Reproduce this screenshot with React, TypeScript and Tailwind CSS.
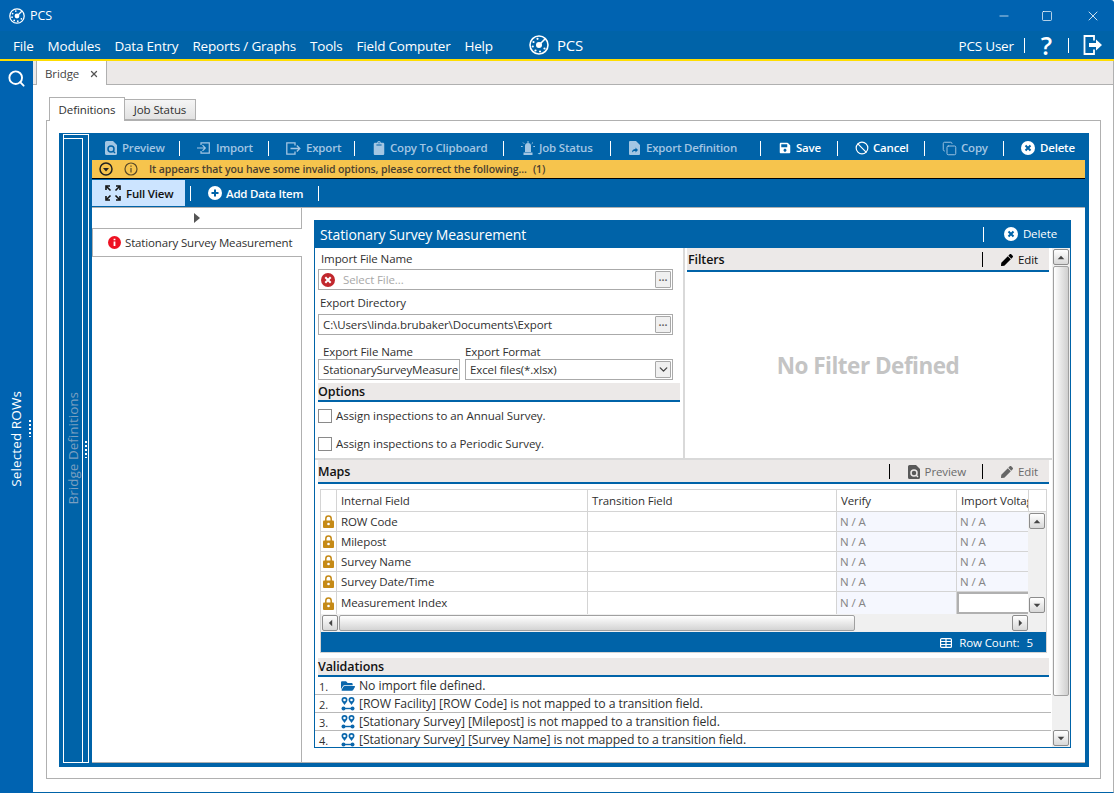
import { ChevronDown, Search, Ban, Copy, X, Minus, Square } from 'lucide-react';
import { FaClipboard, FaFolderOpen, FaPen, FaSave } from 'react-icons/fa';
import type { ReactNode } from 'react';

function PreviewIcon({ cut, className }: { cut: string; className: string }) {
  return (
    <svg viewBox="0 0 12 14" className={className} fill="currentColor">
      <path d="M1.5 0H8l4 4v8.5A1.5 1.5 0 0 1 10.5 14h-9A1.5 1.5 0 0 1 0 12.5v-11A1.5 1.5 0 0 1 1.5 0Z" />
      <circle cx="6" cy="8" r="3" fill="none" stroke={cut} strokeWidth="1.5" />
      <path d="m8 10 2 2" stroke={cut} strokeWidth="1.5" />
    </svg>
  );
}

function ImportIcon() {
  return (
    <svg viewBox="0 0 13 12" className="h-[12px] w-[13px]" fill="none" stroke="currentColor" strokeWidth="1.2">
      <path d="M4 3V.8h8.3v10.400H4V9" />
      <path d="M0 6h8M5.5 3.200 8.300 6 5.500 8.800" />
    </svg>
  );
}

function ExportIcon() {
  return (
    <svg viewBox="0 0 15 13" className="h-[13px] w-[15px]" fill="none" stroke="currentColor" strokeWidth="1.3">
      <path d="M9 3.500V.8H.8v11.400H9V9.500" />
      <path d="M4.500 6.500h9M10.800 3.500l3 3-3 3" />
    </svg>
  );
}

function SirenIcon() {
  return (
    <svg viewBox="0 0 14 14" className="h-[14px] w-[14px]" fill="currentColor">
      <path d="M4 5a3 3 0 0 1 6 0v6H4Z" />
      <path d="M2.500 11.500h9V14h-9Z" />
      <path d="M7 0v2M2 1.500l1.300 1.300M12 1.500l-1.300 1.300M0 5.500h1.700M14 5.500h-1.700" stroke="currentColor" strokeWidth="1" />
    </svg>
  );
}

function ExportDocIcon() {
  return (
    <svg viewBox="0 0 11 14" className="h-[14px] w-[11px]" fill="currentColor">
      <path d="M1 0h6l4 4v9a1 1 0 0 1-1 1H1a1 1 0 0 1-1-1V1a1 1 0 0 1 1-1Z" />
      <path d="M3 11.500c0-2 1.200-3.500 3.500-3.500V6.500L9 9l-2.500 2.500V10c-1.500 0-2.500.4-3.500 1.500Z" fill="#0063a8" />
    </svg>
  );
}

function CircleX({ className }: { className: string }) {
  return (
    <svg viewBox="0 0 14 14" className={className}>
      <circle cx="7" cy="7" r="7" fill="#fff" />
      <path d="m4.500 4.500 5 5m0-5-5 5" stroke="#0063a8" strokeWidth="2" />
    </svg>
  );
}

function FullViewIcon() {
  return (
    <svg viewBox="0 0 16 16" className="h-[16px] w-[16px]" fill="none" stroke="#111" strokeWidth="1.6">
      <path d="M1 5V1h4M11 1h4v4M15 11v4h-4M5 15H1v-4" />
      <path d="m1.500 1.500 4 4M14.500 1.500l-4 4M14.500 14.500l-4-4M1.500 14.500l4-4" />
    </svg>
  );
}

function Lock() {
  return (
    <svg viewBox="0 0 11 13" className="h-[13px] w-[11px]">
      <path d="M2.800 6V3.700a2.700 2.700 0 0 1 5.400 0V6" fill="none" stroke="#c58a17" strokeWidth="1.5" />
      <rect x="0" y="5.500" width="11" height="7.500" rx="1" fill="#c58a17" />
      <circle cx="5.500" cy="9" r="1.300" fill="#fff" />
    </svg>
  );
}

function MapLink() {
  return (
    <svg viewBox="0 0 14 14" className="h-[14px] w-[14px] shrink-0" fill="#0b67ac">
      <path d="M3.500 0a3 3 0 0 1 3 3c0 1.500-2 3.500-3 5-1-1.500-3-3.500-3-5a3 3 0 0 1 3-3Zm0 1.700a1.300 1.300 0 1 0 0 2.600 1.300 1.300 0 0 0 0-2.600Z" />
      <path d="M10.500 0a3 3 0 0 1 3 3c0 1.500-2 3.500-3 5-1-1.500-3-3.500-3-5a3 3 0 0 1 3-3Zm0 1.700a1.300 1.300 0 1 0 0 2.600 1.300 1.300 0 0 0 0-2.600Z" />
      <circle cx="2.500" cy="11.500" r="2" />
      <circle cx="11.500" cy="11.500" r="2" />
      <path d="M3 10.800h8v1.400H3Z" />
    </svg>
  );
}

function Logo({ className }: { className: string }) {
  return (
    <svg viewBox="0 0 20 20" className={className} fill="none" stroke="#fff">
      <circle cx="10" cy="10" r="9" strokeWidth="1.6" />
      <circle cx="10" cy="10" r="3" fill="#fff" stroke="none" />
      <path d="m11 9 5-5" strokeWidth="1.6" />
      <g fill="#fff" stroke="none">
        <circle cx="4.500" cy="7" r="1.100" />
        <circle cx="8.500" cy="3.800" r="1.100" />
        <circle cx="3.800" cy="11.500" r="1.100" />
        <circle cx="6.500" cy="15.500" r="1.100" />
        <circle cx="11" cy="16.500" r="1.100" />
        <circle cx="15.500" cy="13.500" r="1.100" />
      </g>
    </svg>
  );
}

function LogoutIcon() {
  return (
    <svg viewBox="0 0 20 20" className="h-[20px] w-[20px]" fill="none" stroke="#fff" strokeWidth="1.8">
      <path d="M11 5.500V1H1.500v18H11v-4.500" />
      <path d="M6 8h7V4.500l6 5.500-6 5.500V12H6Z" fill="#fff" stroke="none" />
    </svg>
  );
}

function Tri({ dir }: { dir: 'up' | 'down' | 'left' | 'right' }) {
  const pts = { up: '0,5 4,1 8,5', down: '0,1 8,1 4,5', left: '5,0 5,8 1,4', right: '1,0 1,8 5,4' }[dir];
  const box = dir === 'up' || dir === 'down' ? '0 0 8 6' : '0 0 6 8';
  const size = dir === 'up' || dir === 'down' ? 'h-[5px] w-[8px]' : 'h-[8px] w-[5px]';
  return (
    <svg viewBox={box} className={size} fill="#444">
      <polygon points={pts} />
    </svg>
  );
}

function ScrollBtn({ dir }: { dir: 'up' | 'down' | 'left' | 'right' }) {
  return (
    <div className="flex h-[16px] w-[16px] shrink-0 items-center justify-center rounded-[2px] border border-[#8c8c8c] bg-gradient-to-b from-white to-[#d8d8d8]">
      <Tri dir={dir} />
    </div>
  );
}

function Sep({ className = 'bg-white' }: { className?: string }) {
  return <div className={`h-[15px] w-px shrink-0 ${className}`} />;
}

const toolItems: { label: string; icon: ReactNode; width: string; on?: boolean; gap: string }[] = [
  { label: 'Preview', icon: <PreviewIcon cut="#0063a8" className="h-[14px] w-[12px]" />, width: 'w-[87px] pl-[13px]', gap: 'gap-[5px]' },
  { label: 'Import', icon: <ImportIcon />, width: 'w-[88px] pl-[17px]', gap: 'gap-[6px]' },
  { label: 'Export', icon: <ExportIcon />, width: 'w-[85px] pl-[17px]', gap: 'gap-[5px]' },
  { label: 'Copy To Clipboard', icon: <FaClipboard className="h-[14px] w-[12px]" />, width: 'w-[148px] pl-[18px]', gap: 'gap-[5px]' },
  { label: 'Job Status', icon: <SirenIcon />, width: 'w-[106px] pl-[17px]', gap: 'gap-[4px]' },
  { label: 'Export Definition', icon: <ExportDocIcon />, width: 'w-[149px] pl-[18px]', gap: 'gap-[6px]' },
  { label: 'Save', icon: <FaSave className="h-[12px] w-[12px]" />, width: 'w-[76px] pl-[18px]', gap: 'gap-[5px]', on: true },
  { label: 'Cancel', icon: <Ban className="h-[14px] w-[14px]" strokeWidth={2} />, width: 'w-[86px] pl-[17px]', gap: 'gap-[4px]', on: true },
  { label: 'Copy', icon: <Copy className="h-[15px] w-[15px]" strokeWidth={1.5} />, width: 'w-[78px] pl-[17px]', gap: 'gap-[4px]' },
  { label: 'Delete', icon: <CircleX className="h-[14px] w-[14px]" />, width: 'w-[84px] pl-[17px]', gap: 'gap-[5px]', on: true },
];

const menuItems = ['File', 'Modules', 'Data Entry', 'Reports / Graphs', 'Tools', 'Field Computer', 'Help'];

const mapRows = [
  { name: 'ROW Code', h: 'h-[20px]' },
  { name: 'Milepost', h: 'h-[20px]' },
  { name: 'Survey Name', h: 'h-[20px]' },
  { name: 'Survey Date/Time', h: 'h-[20px]' },
  { name: 'Measurement Index', h: 'h-[22px]', last: true },
];

const validations = [
  { text: 'No import file defined.', folder: true },
  { text: '[ROW Facility] [ROW Code] is not mapped to a transition field.' },
  { text: '[Stationary Survey] [Milepost] is not mapped to a transition field.' },
  { text: '[Stationary Survey] [Survey Name] is not mapped to a transition field.' },
];

function SectionHead({ title, className, titleClass = '', children }: { title: string; className: string; titleClass?: string; children?: ReactNode }) {
  return (
    <div className={`flex shrink-0 items-center justify-between border-b-2 border-[#0063a8] bg-[#ece9e8] pt-px font-semibold text-[#111] ${className}`}>
      <span className={titleClass}>{title}</span>
      {children}
    </div>
  );
}

function BrowseBtn() {
  return (
    <div className="flex h-[17px] w-[16px] shrink-0 items-center justify-center rounded-[1px] border border-[#a8a8a8] bg-[#f0f0f0] text-[8px] leading-none tracking-normal text-[#666]">
      •••
    </div>
  );
}

export default function App() {
  return (
    <div className="h-[793px] w-[1116px] overflow-hidden bg-white font-['Open_Sans','Noto_Sans',sans-serif] text-[11.5px] tracking-[-0.1px] text-[#303030]">
      <div className="flex h-[793px] w-[1114px] flex-col rounded-tr-[3px] bg-[#0063b1]">
        {/* title bar */}
        <div className="flex h-[31px] shrink-0 items-center text-white">
          <Logo className="ml-[9px] h-[16px] w-[16px]" />
          <span className="ml-[5px] pt-[2px] text-[12.5px]">PCS</span>
          <Minus className="ml-auto h-[14px] w-[14px]" strokeWidth={1.2} />
          <Square className="ml-[30px] h-[12px] w-[12px]" strokeWidth={1.4} />
          <X className="ml-[32px] mr-[13px] h-[16px] w-[16px]" strokeWidth={1.2} />
        </div>

        {/* menu bar */}
        <div className="flex h-[30px] shrink-0 items-center border-b-2 border-[#ffdd00] bg-[#0063a8] pl-[13px] text-[13.5px] tracking-[-0.2px] text-white">
          <div className="flex gap-[14px] pt-[2px]">
            {menuItems.map(item => (
              <span key={item}>{item}</span>
            ))}
          </div>
          <Logo className="ml-[36px] h-[20px] w-[20px]" />
          <span className="ml-[8px] pt-[1px] text-[15px]">PCS</span>
          <span className="ml-auto pt-[2px]">PCS User</span>
          <div className="ml-[10px] h-[15px] w-px bg-white" />
          <span className="ml-[16px] text-[25px] font-semibold leading-none">?</span>
          <div className="ml-[16px] h-[15px] w-px bg-white" />
          <div className="ml-[14px] mr-[11px]">
            <LogoutIcon />
          </div>
        </div>

        <div className="flex min-h-0 flex-1">
          {/* left rail */}
          <div className="relative flex w-[33px] shrink-0 flex-col items-center text-white">
            <Search className="mt-[8px] h-[19px] w-[19px]" strokeWidth={2.4} />
            <div className="mt-[303px] rotate-180 text-[13.5px] font-medium tracking-[0.1px] [writing-mode:vertical-rl]">Selected ROWs</div>
            <div className="absolute left-[29px] top-[359px] h-[17px] w-[2px] bg-[repeating-linear-gradient(to_bottom,#fff_0,#fff_2px,transparent_2px,transparent_4px)]" />
          </div>

          <div className="flex min-w-0 flex-1 flex-col border-b border-r border-[#0063a8] border-r-[#b0b0b0] bg-white">
            {/* document tab strip */}
            <div className="flex h-[24px] shrink-0 border-b border-[#b0b0b0] bg-[#ece9e8] pl-[3px]">
              <div className="flex h-[24px] w-[71px] items-center border-x border-[#b0b0b0] bg-white pl-[8px] pt-[2px] text-[#444]">
                Bridge
                <X className="ml-[10px] h-[10px] w-[10px] text-[#555]" strokeWidth={3} />
              </div>
            </div>

            <div className="flex min-h-0 flex-1 flex-col pb-[13px] pl-[13px] pr-[12px] pt-[12px]">
              {/* inner tabs */}
              <div className="relative z-10 -mb-px flex h-[24px] shrink-0 items-end pl-[3px]">
                <div className="flex h-[24px] w-[76px] items-center justify-center border-x border-t border-[#b0b0b0] bg-white pt-px">Definitions</div>
                <div className="mb-px flex h-[21px] w-[71px] items-center justify-center border-y border-r border-[#b0b0b0] bg-gradient-to-b from-[#f5f5f5] to-[#e2e2e2]">Job Status</div>
              </div>

              <div className="flex min-h-0 flex-1 flex-col border border-[#b0b0b0] pb-[11px] pl-[12px] pr-[11px] pt-[12px]">
                <div className="flex min-h-0 flex-1 bg-[#0063a8] pb-[4px] pl-[4px]">
                  {/* collapsed Bridge Definitions strip */}
                  <div className="relative mt-px w-[26px] shrink-0 border border-white">
                    <div className="mt-[3px] flex h-[calc(100%-3px)] w-[19px] items-center justify-center border-r border-t border-white">
                      <div className="mb-[4px] rotate-180 text-[13.5px] font-medium tracking-normal text-[#7a9fc0] [writing-mode:vertical-rl]">Bridge Definitions</div>
                    </div>
                    <div className="absolute left-[21px] top-[306px] h-[17px] w-[2px] bg-[repeating-linear-gradient(to_bottom,#fff_0,#fff_2px,transparent_2px,transparent_4px)]" />
                  </div>

                  <div className="ml-[3px] flex min-w-0 flex-1 flex-col">
                    {/* toolbar */}
                    <div className="flex h-[27px] shrink-0 items-center pt-[3px]">
                      {toolItems.map((t, i) => (
                        <div key={t.label} className="flex items-center">
                          <div className={`flex items-center font-semibold tracking-[-0.2px] ${t.width} ${t.gap} ${t.on ? 'text-white' : 'text-[#a3c6e3]'}`}>
                            {t.icon}
                            <span>{t.label}</span>
                          </div>
                          {i < toolItems.length - 1 && <Sep />}
                        </div>
                      ))}
                    </div>

                    {/* warning bar */}
                    <div className="mr-[4px] flex h-[19px] shrink-0 items-center border-b border-black bg-[#f6c44d] pl-[7px] text-[10.5px] font-semibold text-[#4a4030]">
                      <svg viewBox="0 0 14 14" className="h-[14px] w-[14px]" fill="none" stroke="#222" strokeWidth="1.5">
                        <circle cx="7" cy="7" r="6" />
                        <path d="M4 6h6L7 9.500Z" fill="#222" stroke="none" />
                      </svg>
                      <svg viewBox="0 0 14 14" className="ml-[11px] h-[14px] w-[14px]" fill="none" stroke="#5a4a28" strokeWidth="1.2">
                        <circle cx="7" cy="7" r="6" />
                        <path d="M7 6v4.500M7 3.500v1.200" />
                      </svg>
                      <span className="ml-[11px] pt-px">It appears that you have some invalid options, please correct the following...</span>
                      <span className="ml-[6px] pt-px">(1)</span>
                    </div>

                    {/* view bar */}
                    <div className="flex h-[28px] shrink-0 items-center text-white">
                      <div className="flex h-[26px] w-[93px] items-center gap-[5px] bg-[#cce4ff] pl-[13px] font-semibold tracking-[-0.2px] text-[#111]">
                        <FullViewIcon />
                        <span className="pt-[2px]">Full View</span>
                      </div>
                      <div className="ml-[5px] h-[15px] w-px bg-white" />
                      <div className="ml-[17px] flex items-center gap-[4px] font-semibold tracking-[-0.2px]">
                        <svg viewBox="0 0 14 14" className="h-[14px] w-[14px]">
                          <circle cx="7" cy="7" r="7" fill="#fff" />
                          <path d="M7 3.500v7M3.500 7h7" stroke="#0063a8" strokeWidth="2" />
                        </svg>
                        <span className="pt-[2px]">Add Data Item</span>
                      </div>
                      <div className="ml-[15px] h-[15px] w-px bg-white" />
                    </div>

                    {/* work area */}
                    <div className="mr-[4px] flex min-h-0 flex-1 border-b border-t border-[#b0b0b0] bg-white">
                      <div className="flex w-[210px] shrink-0 flex-col">
                        <div className="flex h-[21px] shrink-0 items-center justify-center border-b border-r border-[#b0b0b0]">
                          <svg viewBox="0 0 6 10" className="h-[10px] w-[6px]" fill="#555">
                            <polygon points="0,0 6,5 0,10" />
                          </svg>
                        </div>
                        <div className="flex h-[28px] shrink-0 items-center gap-[4px] border-b border-l border-[#b0b0b0] pl-[15px]">
                          <svg viewBox="0 0 13 13" className="h-[13px] w-[13px] shrink-0">
                            <circle cx="6.500" cy="6.500" r="6.500" fill="#ee1122" />
                            <path d="M6.500 5.500V10M6.500 2.800v1.400" stroke="#fff" strokeWidth="1.8" />
                          </svg>
                          <span className="whitespace-nowrap tracking-[-0.15px]">Stationary Survey Measurement</span>
                        </div>
                        <div className="flex-1 border-r border-[#b0b0b0]" />
                      </div>

                      {/* detail panel */}
                      <div className="ml-[12px] mt-[12px] flex h-[528px] w-[757px] shrink-0 flex-col">
                        <div className="flex h-[28px] shrink-0 items-center bg-[#0063a8] pl-[6px] text-white">
                          <span className="pt-px text-[14px] font-medium">Stationary Survey Measurement</span>
                          <div className="ml-auto h-[15px] w-px bg-white" />
                          <CircleX className="ml-[20px] h-[14px] w-[14px]" />
                          <span className="ml-[5px] mr-[14px]">Delete</span>
                        </div>

                        <div className="flex min-h-0 flex-1 border-x border-b border-[#0063a8]">
                          <div className="flex min-w-0 flex-1 flex-col">
                            {/* upper half */}
                            <div className="flex h-[210px] shrink-0">
                              <div className="flex w-[370px] shrink-0 flex-col border-r-2 border-[#d9d9d9]">
                                <div className="flex h-[21px] items-end pb-[2px] pl-[6px]">Import File Name</div>
                                <div className="ml-[3px] flex h-[21px] w-[355px] items-center border border-[#aaa] pl-[2px] pr-px">
                                  <svg viewBox="0 0 14 14" className="h-[14px] w-[14px]">
                                    <circle cx="7" cy="7" r="7" fill="#c1272d" />
                                    <path d="m4.300 4.300 5.400 5.400m0-5.400-5.400 5.400" stroke="#fff" strokeWidth="2" />
                                  </svg>
                                  <span className="ml-[8px] text-[#a8a8a8]">Select File...</span>
                                  <div className="ml-auto">
                                    <BrowseBtn />
                                  </div>
                                </div>
                                <div className="flex h-[24px] items-end pb-[3px] pl-[5px]">Export Directory</div>
                                <div className="ml-[3px] flex h-[21px] w-[355px] items-center border border-[#aaa] pl-[4px] pr-px">
                                  <span>C:\Users\linda.brubaker\Documents\Export</span>
                                  <div className="ml-auto">
                                    <BrowseBtn />
                                  </div>
                                </div>
                                <div className="ml-[3px] mt-[9px] flex w-[355px] gap-[5px]">
                                  <div className="w-[142px] shrink-0">
                                    <div className="h-[15px] pl-[5px] leading-[15px]">Export File Name</div>
                                    <div className="flex h-[21px] items-center overflow-hidden whitespace-nowrap border border-[#aaa] pl-[4px]">StationarySurveyMeasure</div>
                                  </div>
                                  <div className="min-w-0 flex-1">
                                    <div className="h-[15px] leading-[15px]">Export Format</div>
                                    <div className="flex h-[21px] items-center border border-[#aaa] pl-[4px] pr-px">
                                      Excel files(*.xlsx)
                                      <div className="ml-auto flex h-[17px] w-[16px] items-center justify-center rounded-[1px] border border-[#a8a8a8] bg-[#f0f0f0]">
                                        <ChevronDown className="h-[13px] w-[13px] text-[#444]" strokeWidth={2.5} />
                                      </div>
                                    </div>
                                  </div>
                                </div>
                                <SectionHead title="Options" className="ml-[3px] mt-[3px] h-[19px] w-[362px] text-[12.5px]" />
                                <div className="ml-[3px] mt-[7px] flex h-[14px] items-center gap-[4px] tracking-[-0.05px]">
                                  <div className="h-[14px] w-[14px] border border-[#8a8a8a] bg-white" />
                                  Assign inspections to an Annual Survey.
                                </div>
                                <div className="ml-[3px] mt-[14px] flex h-[14px] items-center gap-[4px] tracking-[-0.05px]">
                                  <div className="h-[14px] w-[14px] border border-[#8a8a8a] bg-white" />
                                  Assign inspections to a Periodic Survey.
                                </div>
                              </div>

                              <div className="flex min-w-0 flex-1 flex-col pl-[2px] pr-[3px]">
                                <SectionHead title="Filters" titleClass="pt-[2px]" className="h-[24px] pl-px text-[12.5px]">
                                  <div className="flex items-center text-[11.5px] font-normal">
                                    <Sep className="bg-black" />
                                    <FaPen className="ml-[18px] h-[12px] w-[12px] text-black" />
                                    <span className="ml-[5px] mr-[11px]">Edit</span>
                                  </div>
                                </SectionHead>
                                <div className="flex flex-1 items-center justify-center pt-[2px] text-[22.5px] font-bold tracking-[-0.5px] text-[#c4c4c4]">No Filter Defined</div>
                              </div>
                            </div>

                            {/* maps */}
                            <div className="flex h-[200px] shrink-0 flex-col border-t-2 border-[#d9d9d9]">
                              <SectionHead title="Maps" titleClass="pt-[2px]" className="ml-[3px] mr-[3px] h-[24px] text-[12.5px]">
                                <div className="flex items-center text-[11.5px] font-normal text-[#6b6b6b]">
                                  <Sep className="bg-black" />
                                  <div className="ml-[18px] text-[#595959]">
                                    <PreviewIcon cut="#ece9e8" className="h-[14px] w-[12px]" />
                                  </div>
                                  <span className="ml-[5px]">Preview</span>
                                  <div className="ml-[16px]">
                                    <Sep className="bg-black" />
                                  </div>
                                  <FaPen className="ml-[18px] h-[12px] w-[12px] text-[#666]" />
                                  <span className="ml-[5px] mr-[11px]">Edit</span>
                                </div>
                              </SectionHead>

                              <div className="ml-[5px] mt-[5px] flex h-[164px] w-[727px] shrink-0 flex-col border border-[#d4d4d4]">
                                <div className="flex h-[22px] shrink-0 border-b border-[#d4d4d4]">
                                  <div className="w-[16px] border-r border-[#d4d4d4]" />
                                  <div className="flex w-[251px] items-center border-r border-[#d4d4d4] pl-[4px]">Internal Field</div>
                                  <div className="flex w-[249px] items-center border-r border-[#d4d4d4] pl-[4px]">Transition Field</div>
                                  <div className="flex w-[120px] items-center border-r border-[#d4d4d4] pl-[4px]">Verify</div>
                                  <div className="flex w-[72px] items-center overflow-hidden whitespace-nowrap border-r border-[#d4d4d4] pl-[4px]">Import Voltage</div>
                                </div>
                                <div className="flex h-[102px] shrink-0">
                                  <div className="w-[707px] shrink-0">
                                    {mapRows.map(r => (
                                      <div key={r.name} className={`flex ${r.h} ${r.last ? '' : 'border-b border-[#d4d4d4]'}`}>
                                        <div className="flex w-[16px] items-center justify-center border-r border-[#d4d4d4]">
                                          <Lock />
                                        </div>
                                        <div className="flex w-[251px] items-center border-r border-[#d4d4d4] pl-[4px]">{r.name}</div>
                                        <div className="w-[249px] border-r border-[#d4d4d4]" />
                                        <div className="flex w-[120px] items-center border-r border-[#d4d4d4] bg-[#f5f7fe] pl-[3px] text-[#858585]">N / A</div>
                                        {r.last ? (
                                          <div className="w-[71px] border-2 border-r-0 border-[#b0b0b0] bg-white" />
                                        ) : (
                                          <div className="flex w-[71px] items-center bg-[#f5f7fe] pl-[3px] text-[#858585]">N / A</div>
                                        )}
                                      </div>
                                    ))}
                                  </div>
                                  <div className="flex flex-1 flex-col items-center justify-between bg-[#f0f0f0] pb-[1px] pt-[1px]">
                                    <ScrollBtn dir="up" />
                                    <ScrollBtn dir="down" />
                                  </div>
                                </div>
                                <div className="flex h-[18px] shrink-0 items-center bg-[#f0f0f0] pl-[1px]">
                                  <ScrollBtn dir="left" />
                                  <div className="ml-[1px] h-[16px] w-[516px] rounded-[2px] border border-[#a0a0a0] bg-gradient-to-b from-white to-[#d4d4d4]" />
                                  <div className="ml-[157px]">
                                    <ScrollBtn dir="right" />
                                  </div>
                                </div>
                                <div className="flex flex-1 items-center bg-[#0063a8] pr-[13px] pt-px text-white">
                                  <svg viewBox="0 0 12 10" className="ml-auto h-[10px] w-[12px]" fill="none" stroke="#fff" strokeWidth="1.2">
                                    <rect x=".6" y=".6" width="10.8" height="8.8" rx="1" />
                                    <path d="M.6 3.500h10.800M.6 6.500h10.800M6 .6v8.800" />
                                  </svg>
                                  <span className="ml-[7px]">Row Count:</span>
                                  <span className="ml-[7px]">5</span>
                                </div>
                              </div>
                            </div>

                            {/* validations */}
                            <div className="flex min-h-0 flex-1 flex-col">
                              <SectionHead title="Validations" className="ml-[3px] mr-[3px] h-[19px] text-[12.5px]" />
                              <div className="min-h-0 flex-1 overflow-hidden pr-px">
                                {validations.map((v, i) => (
                                  <div key={v.text} className="flex h-[18px] items-center border-b border-[#b8b8b8] last:border-b-0">
                                    <span className="w-[26px] pl-[4px] pt-[3px] text-[11px]">{i + 1}.</span>
                                    {v.folder ? <FaFolderOpen className="h-[14px] w-[14px] text-[#0b67ac]" /> : <MapLink />}
                                    <span className="ml-[4px] whitespace-nowrap pt-px text-[12.25px]">{v.text}</span>
                                  </div>
                                ))}
                              </div>
                            </div>
                          </div>

                          {/* panel scrollbar */}
                          <div className="flex w-[18px] shrink-0 flex-col items-center bg-[#f0f0f0] pb-[1px] pt-[1px]">
                            <ScrollBtn dir="up" />
                            <div className="mt-px h-[430px] w-[16px] rounded-[2px] border border-[#a0a0a0] bg-gradient-to-r from-white to-[#cfcfcf]" />
                            <div className="mt-auto">
                              <ScrollBtn dir="down" />
                            </div>
                          </div>
                        </div>
                      </div>
                    </div>
                  </div>
                </div>
              </div>
            </div>
          </div>
        </div>
      </div>
    </div>
  );
}
